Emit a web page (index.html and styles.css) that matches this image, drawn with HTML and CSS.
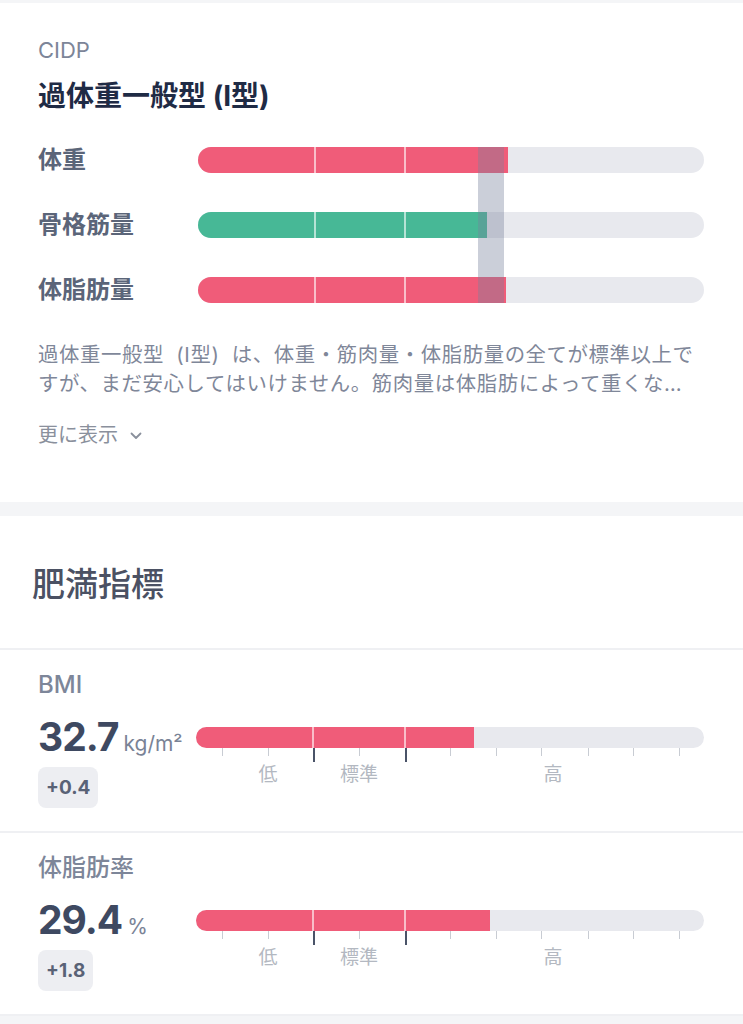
FILE: index.html
```html
<!DOCTYPE html>
<html lang="ja">
<head>
<meta charset="utf-8">
<title>体組成</title>
<link rel="stylesheet" href="styles.css">
</head>
<body>
<div class="page">
  <div class="strip strip-top"></div>

  <section class="type-card">
    <div class="eyebrow">CIDP</div>
    <h2 class="type-title">過体重一般型 (I型)</h2>

    <div class="composition">
      <div class="comp-labels">
        <span class="comp-label">体重</span>
        <span class="comp-label">骨格筋量</span>
        <span class="comp-label">体脂肪量</span>
      </div>
      <div class="comp-bars">
        <div class="track track-lg">
          <div class="fill fill-red" style="width:310px"></div>
          <i class="divider" style="left:116px"></i>
          <i class="divider" style="left:206px"></i>
        </div>
        <div class="track track-lg">
          <div class="fill fill-green" style="width:289px"></div>
          <i class="divider" style="left:116px"></i>
          <i class="divider" style="left:206px"></i>
        </div>
        <div class="track track-lg">
          <div class="fill fill-red" style="width:308px"></div>
          <i class="divider" style="left:116px"></i>
          <i class="divider" style="left:206px"></i>
        </div>
        <div class="overlay" style="left:280px"></div>
      </div>
    </div>

    <p class="desc">過体重一般型 (I型) は、体重・筋肉量・体脂肪量の全てが標準以上ですが、まだ安心してはいけません。筋肉量は体脂肪によって重くなっている可能性があります。</p>

    <button class="more" type="button">更に表示
      <svg class="chev" width="12" height="8" viewBox="0 0 12 8"><path d="M1.5 1.5 L6 6 L10.5 1.5" fill="none" stroke="#8a909c" stroke-width="1.8" stroke-linecap="round" stroke-linejoin="round"/></svg>
    </button>
  </section>

  <div class="strip strip-gap"></div>

  <section class="heading-card">
    <h2 class="section-title">肥満指標</h2>
  </section>

  <section class="metric">
    <div class="metric-name">BMI</div>
    <div class="metric-body">
      <div class="metric-left">
        <div class="value"><span class="num">32.7</span><span class="unit">kg/m²</span></div>
        <span class="badge">+0.4</span>
      </div>
      <div class="scale">
        <div class="track track-sm">
          <div class="fill fill-red" style="width:278px"></div>
          <i class="divider" style="left:116px"></i>
          <i class="divider" style="left:208px"></i>
        </div>
        <div class="ticks">
          <i class="tick" style="left:26px"></i>
          <i class="tick" style="left:72px"></i>
          <i class="tick tick-major" style="left:117px"></i>
          <i class="tick" style="left:163px"></i>
          <i class="tick tick-major" style="left:209px"></i>
          <i class="tick" style="left:254px"></i>
          <i class="tick" style="left:300px"></i>
          <i class="tick" style="left:345px"></i>
          <i class="tick" style="left:392px"></i>
          <i class="tick" style="left:437px"></i>
          <i class="tick" style="left:483px"></i>
        </div>
        <div class="scale-labels">
          <span class="scale-label" style="left:72px">低</span>
          <span class="scale-label" style="left:163px">標準</span>
          <span class="scale-label" style="left:357px">高</span>
        </div>
      </div>
    </div>
  </section>

  <section class="metric">
    <div class="metric-name">体脂肪率</div>
    <div class="metric-body">
      <div class="metric-left">
        <div class="value"><span class="num">29.4</span><span class="unit">%</span></div>
        <span class="badge">+1.8</span>
      </div>
      <div class="scale">
        <div class="track track-sm">
          <div class="fill fill-red" style="width:294px"></div>
          <i class="divider" style="left:116px"></i>
          <i class="divider" style="left:208px"></i>
        </div>
        <div class="ticks">
          <i class="tick" style="left:26px"></i>
          <i class="tick" style="left:72px"></i>
          <i class="tick tick-major" style="left:117px"></i>
          <i class="tick" style="left:163px"></i>
          <i class="tick tick-major" style="left:209px"></i>
          <i class="tick" style="left:254px"></i>
          <i class="tick" style="left:300px"></i>
          <i class="tick" style="left:345px"></i>
          <i class="tick" style="left:392px"></i>
          <i class="tick" style="left:437px"></i>
          <i class="tick" style="left:483px"></i>
        </div>
        <div class="scale-labels">
          <span class="scale-label" style="left:72px">低</span>
          <span class="scale-label" style="left:163px">標準</span>
          <span class="scale-label" style="left:357px">高</span>
        </div>
      </div>
    </div>
  </section>

  <div class="strip strip-bottom"></div>
</div>
</body>
</html>
```

FILE: styles.css
```css
* { box-sizing: border-box; }

html, body {
  margin: 0;
  padding: 0;
  background: #ffffff;
}

body {
  font-family: "Inter", "Noto Sans CJK JP", sans-serif;
  color: #1f2b45;
  -webkit-font-smoothing: antialiased;
}

.page {
  width: 743px;
  display: flex;
  flex-direction: column;
}

.strip { background: #f4f5f7; }
.strip-top { height: 3px; }
.strip-gap { height: 14px; }
.strip-bottom { height: 10px; }

/* ---------- type card ---------- */
.type-card {
  padding: 33px 39px 54px 38px;
  display: flex;
  flex-direction: column;
  align-items: flex-start;
}

.eyebrow {
  font-size: 22px;
  line-height: 28px;
  color: #7c8598;
  font-weight: 400;
}

.type-title {
  margin: 14px 0 0;
  font-size: 28px;
  line-height: 36px;
  font-weight: 700;
  color: #1f2b45;
}

.composition {
  margin-top: 33px;
  width: 100%;
  display: flex;
}

.comp-labels {
  width: 160px;
  flex: none;
  display: flex;
  flex-direction: column;
  gap: 39px;
}

.comp-label {
  height: 26px;
  line-height: 26px;
  font-size: 24px;
  font-weight: 700;
  color: #5b6579;
}

.comp-bars {
  position: relative;
  flex: 1;
  display: flex;
  flex-direction: column;
  gap: 39px;
}

.track {
  position: relative;
  width: 100%;
  background: #e8e9ee;
  overflow: hidden;
}

.track-lg { height: 26px; border-radius: 13px; }
.track-sm { height: 21px; border-radius: 10.5px; }

.fill {
  height: 100%;
}
.fill-red { background: #f05c79; }
.fill-green { background: #47b896; }

.divider {
  position: absolute;
  top: 0;
  bottom: 0;
  width: 2px;
  background: rgba(255, 255, 255, 0.6);
}

.overlay {
  position: absolute;
  top: 0;
  bottom: 0;
  width: 26px;
  background: rgba(118, 130, 156, 0.38);
}

.desc {
  margin: 37px 0 0;
  font-size: 20.4px;
  line-height: 29px;
  color: #7f8799;
  width: 659px;
  display: -webkit-box;
  -webkit-line-clamp: 2;
  -webkit-box-orient: vertical;
  overflow: hidden;
  word-spacing: 6px;
  letter-spacing: 0.6px;
}

.more {
  margin-top: 24px;
  padding: 0;
  border: 0;
  background: none;
  font-family: inherit;
  font-size: 20px;
  line-height: 26px;
  color: #8a909c;
  display: flex;
  align-items: center;
  gap: 12px;
  cursor: pointer;
}

.chev { display: block; margin-top: 1px; }

/* ---------- heading ---------- */
.heading-card {
  height: 134px;
  padding: 0 32px;
  display: flex;
  align-items: center;
  border-bottom: 2px solid #eff0f3;
}

.section-title {
  margin: 4px 0 0;
  font-size: 33px;
  line-height: 44px;
  font-weight: 500;
  color: #4b5163;
}

/* ---------- metrics ---------- */
.metric {
  padding: 20px 39px 23px 38px;
  border-bottom: 2px solid #eff0f3;
  display: flex;
  flex-direction: column;
}

.metric-name {
  font-size: 24px;
  line-height: 30px;
  color: #7d8699;
  font-weight: 500;
}

.metric-body {
  margin-top: 15px;
  display: flex;
}

.metric-left {
  width: 158px;
  flex: none;
  display: flex;
  flex-direction: column;
  align-items: flex-start;
  gap: 8px;
}

.value {
  height: 44px;
  display: flex;
  align-items: baseline;
  gap: 5px;
}

.num {
  font-size: 39px;
  line-height: 44px;
  font-weight: 700;
  letter-spacing: -1px;
  color: #3e4961;
}

.unit {
  font-size: 21px;
  color: #7a8396;
  font-weight: 400;
}

.badge {
  height: 41px;
  padding: 0 8px;
  border-radius: 8px;
  background: #edeef2;
  font-size: 19px;
  line-height: 41px;
  font-weight: 700;
  color: #596276;
}

.scale {
  flex: 1;
  padding-top: 12px;
}

.ticks {
  position: relative;
  height: 14px;
}

.tick {
  position: absolute;
  top: 0;
  width: 1px;
  height: 8px;
  background: #c8ccd3;
}

.tick-major {
  width: 1.5px;
  height: 14px;
  background: #4a5368;
}

.scale-labels {
  position: relative;
  height: 26px;
}

.scale-label {
  position: absolute;
  top: 0;
  transform: translateX(-50%);
  font-size: 19px;
  line-height: 26px;
  color: #b3b8c1;
  white-space: nowrap;
}
```
